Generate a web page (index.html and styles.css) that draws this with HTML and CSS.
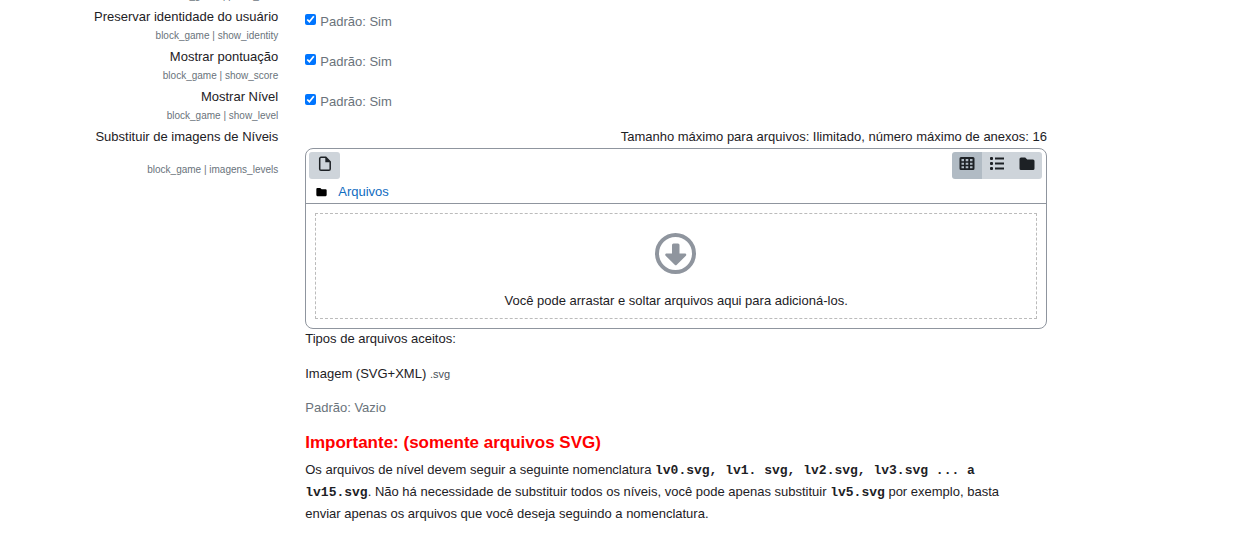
FILE: index.html
```html
<!DOCTYPE html>
<html lang="pt-BR">
<head>
<meta charset="utf-8">
<title>Configurações do bloco</title>
<link rel="stylesheet" href="styles.css">
</head>
<body>
<form class="settings">
  <div class="row">
    <div class="label-col"><span class="setting-name">&nbsp;</span><small class="shortname">block_game | photo_user</small></div>
    <div class="field-col"></div>
  </div>
  <div class="row">
    <div class="label-col"><label class="setting-name" for="identity">Preservar identidade do usuário</label><small class="shortname">block_game | show_identity</small></div>
    <div class="field-col check"><input type="checkbox" id="identity" checked><span class="default">Padrão: Sim</span></div>
  </div>
  <div class="row">
    <div class="label-col"><label class="setting-name" for="score">Mostrar pontuação</label><small class="shortname">block_game | show_score</small></div>
    <div class="field-col check"><input type="checkbox" id="score" checked><span class="default">Padrão: Sim</span></div>
  </div>
  <div class="row">
    <div class="label-col"><label class="setting-name" for="level">Mostrar Nível</label><small class="shortname">block_game | show_level</small></div>
    <div class="field-col check"><input type="checkbox" id="level" checked><span class="default">Padrão: Sim</span></div>
  </div>
  <div class="row">
    <div class="label-col spaced"><span class="setting-name">Substituir de imagens de Níveis</span><small class="shortname">block_game | imagens_levels</small></div>
    <div class="field-col">
      <div class="limits">Tamanho máximo para arquivos: Ilimitado, número máximo de anexos: 16</div>
      <div class="manager">
        <div class="toolbar">
          <button type="button" class="tool add" aria-label="Adicionar">
            <svg class="icon" viewBox="0 0 16 16"><path d="M4 1.300h4.800l4.400 4.400v7.300a1.300 1.300 0 0 1-1.300 1.300H4a1.300 1.300 0 0 1-1.300-1.300V2.600A1.300 1.300 0 0 1 4 1.300z" fill="none" stroke="currentColor" stroke-width="1.500"/><path d="M8.300 1v5.200h5.200z"/></svg>
          </button>
          <div class="views">
            <button type="button" class="tool active" aria-label="Ícones">
              <svg class="icon" viewBox="0 0 16 16"><path fill-rule="evenodd" d="M2 1h12a1.500 1.500 0 0 1 1.500 1.500v10a1.500 1.500 0 0 1-1.500 1.500H2a1.500 1.500 0 0 1-1.500-1.500v-10A1.500 1.500 0 0 1 2 1zM2.500 3v2.200h2.500V3zm4.200 0v2.200h2.600V3zM11 3v2.200h2.500V3zM2.500 6.700v2h2.500v-2zm4.200 0v2h2.600v-2zm4.300 0v2h2.500v-2zM2.500 10.200v2h2.500v-2zm4.200 0v2h2.600v-2zm4.300 0v2h2.500v-2z"/></svg>
            </button>
            <button type="button" class="tool" aria-label="Lista">
              <svg class="icon" viewBox="0 0 16 16"><rect x="1" y="1" width="3" height="3" rx="1"/><rect x="1" y="6" width="3" height="3" rx="1"/><rect x="1" y="11" width="3" height="3" rx="1"/><path d="M6 1.600h9v1.800H6zM6 6.600h9v1.800H6zM6 11.600h9v1.800H6z"/></svg>
            </button>
            <button type="button" class="tool" aria-label="Árvore">
              <svg class="icon" viewBox="0 0 16 16"><path d="M2 1.500h4.200l2 2H14A1.500 1.500 0 0 1 15.500 5v7.500A1.500 1.500 0 0 1 14 14H2a1.500 1.500 0 0 1-1.500-1.500V3A1.500 1.500 0 0 1 2 1.500z"/></svg>
            </button>
          </div>
        </div>
        <div class="path">
          <svg class="path-icon" viewBox="0 0 16 16"><path d="M2 2h4.200l2 2H14a1.500 1.500 0 0 1 1.500 1.500v7A1.500 1.500 0 0 1 14 14H2a1.500 1.500 0 0 1-1.500-1.500v-9A1.500 1.500 0 0 1 2 2z"/></svg>
          <a href="#">Arquivos</a>
        </div>
        <div class="content">
          <div class="dropzone">
            <svg class="drop-icon" viewBox="0 0 42 42"><circle cx="20.500" cy="20.500" r="18.500" fill="none" stroke="currentColor" stroke-width="4"/><path d="M18.500 10.500h4.500a1.500 1.500 0 0 1 1.500 1.500v8.500h5.500c1.200 0 1.700 1.400.9 2.200l-9.100 9a1.500 1.500 0 0 1-2.100 0l-9.100-9c-.8-.8-.3-2.200.9-2.200h5.500V12a1.500 1.500 0 0 1 1.500-1.500z"/></svg>
            <div>Você pode arrastar e soltar arquivos aqui para adicioná-los.</div>
          </div>
        </div>
      </div>
      <p class="types">Tipos de arquivos aceitos:</p>
      <p class="types">Imagem (SVG+XML) <small class="ext">.svg</small></p>
      <p class="types default">Padrão: Vazio</p>
      <h5 class="warning">Importante: (somente arquivos SVG)</h5>
      <p class="help">Os arquivos de nível devem seguir a seguinte nomenclatura <b class="file">lv0.svg, lv1. svg, lv2.svg, lv3.svg ... a lv15.svg</b>. Não há necessidade de substituir todos os níveis, você pode apenas substituir <b class="file">lv5.svg</b> por exemplo, basta enviar apenas os arquivos que você deseja seguindo a nomenclatura.</p>
    </div>
  </div>
</form>
</body>
</html>
```
FILE: styles.css
```css
* { box-sizing: border-box; }
body {
  margin: 0;
  overflow: hidden;
  background: #fff;
  color: #1d2125;
  font-family: "Liberation Sans", Arial, sans-serif;
  font-size: 13px;
  line-height: 20px;
}
.settings { margin: -33px 200px 0 35px; }
.row {
  display: grid;
  grid-template-columns: 1fr 3fr;
  min-height: 40px;
}
.label-col {
  display: flex;
  flex-direction: column;
  padding: 0 13px;
  text-align: right;
}
.shortname {
  color: #6a737b;
  font-size: 10px;
  line-height: 18px;
}
.spaced { gap: 14px; }
.field-col { padding: 0 13px 0 14px; }
.check {
  display: flex;
  align-items: flex-start;
  gap: 4px;
  padding-top: 5px;
}
.check input {
  width: 11px;
  height: 11px;
  margin: 2px 0 0;
}
.default { color: #6a737b; }
.limits { text-align: right; margin-bottom: 1px; }
.manager {
  border: 1px solid #8f959e;
  border-radius: 8px;
}
.toolbar {
  display: flex;
  justify-content: space-between;
  padding: 3px 4px 0 3px;
}
.views { display: flex; }
.tool {
  width: 30px;
  height: 27px;
  padding: 0 0 3px;
  border: 0;
  background: #ced4da;
  color: #1d2125;
  display: flex;
  align-items: center;
  justify-content: center;
}
.add { width: 31px; border-radius: 3px; }
.views .tool:first-child { border-radius: 3px 0 0 3px; }
.views .tool:last-child { border-radius: 0 3px 3px 0; }
.active { background: #b1bbc4; }
.icon { width: 16px; height: 16px; fill: currentColor; }
.path {
  display: flex;
  align-items: center;
  gap: 11px;
  padding: 3px 10px 1px;
  border-bottom: 1px solid #8f959e;
}
.path-icon { width: 11px; height: 12px; fill: #000; }
.path a { color: #0f6cbf; text-decoration: none; }
.content { padding: 9px; }
.dropzone {
  display: flex;
  flex-direction: column;
  align-items: center;
  gap: 16px;
  padding: 19px 0 7px;
  border: 1px dashed #bbb;
}
.drop-icon { width: 42px; height: 42px; color: #8f959e; fill: currentColor; }
.types { margin: 0 0 15px; }
.types.default { margin: -1px 0 15px; }
.ext { font-size: 11px; line-height: 1; color: #495057; }
.warning {
  margin: 0 0 6px;
  color: #f00;
  font-size: 17px;
  line-height: 20px;
}
.help { margin: 0; padding-right: 16px; line-height: 22px; }
.file { font-family: "Liberation Mono", monospace; line-height: 1; }
```
